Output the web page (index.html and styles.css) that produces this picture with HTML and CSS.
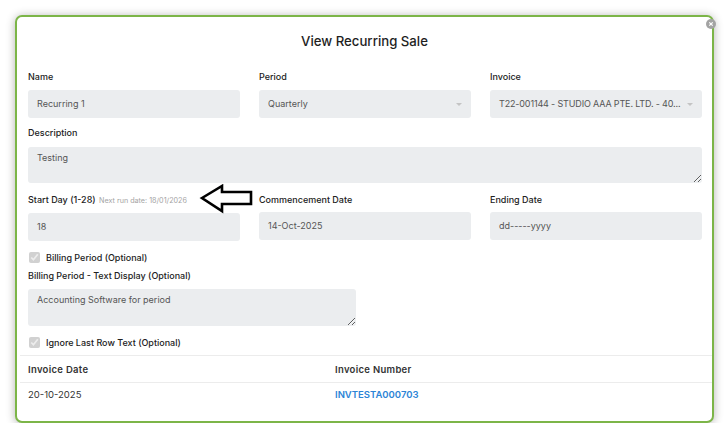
FILE: index.html
```html
<!DOCTYPE html>
<html>
<head>
<meta charset="utf-8">
<link rel="stylesheet" href="styles.css">
</head>
<body>
<div class="modal">
  <span class="close" aria-label="close"><svg width="10" height="10" viewBox="0 0 10 10"><circle cx="5" cy="5" r="5" fill="#a3a3a3"/><path d="M3.3 3.3 L6.7 6.7 M6.7 3.3 L3.3 6.7" stroke="#fff" stroke-width="1.2"/></svg></span>
  <h1 class="title">View Recurring Sale</h1>
  <div class="form">
    <div class="row3">
      <div class="field">
        <label class="lbl">Name</label>
        <div class="input">Recurring 1</div>
      </div>
      <div class="field">
        <label class="lbl">Period</label>
        <div class="input select">Quarterly<span class="caret"></span></div>
      </div>
      <div class="field">
        <label class="lbl">Invoice</label>
        <div class="input select inv">T22-001144 - STUDIO AAA PTE. LTD. - 40...<span class="caret"></span></div>
      </div>
    </div>
    <div class="field desc">
      <label class="lbl">Description</label>
      <textarea class="area area-desc" readonly>Testing</textarea>
    </div>
    <div class="row3 dates">
      <div class="field">
        <label class="lbl">Start Day (1-28) <span class="hint">Next run date: 18/01/2026</span></label>
        <div class="input">18</div>
      </div>
      <div class="field">
        <label class="lbl">Commencement Date</label>
        <div class="input">14-Oct-2025</div>
      </div>
      <div class="field">
        <label class="lbl">Ending Date</label>
        <div class="input">dd-----yyyy</div>
      </div>
    </div>
    <label class="check check-billing"><input type="checkbox" checked disabled> Billing Period (Optional)</label>
    <div class="field billing">
      <label class="lbl">Billing Period - Text Display (Optional)</label>
      <textarea class="area area-billing" readonly>Accounting Software for period</textarea>
    </div>
    <label class="check check-ignore"><input type="checkbox" checked disabled> Ignore Last Row Text (Optional)</label>
  </div>
  <table class="tbl">
    <thead>
      <tr><th class="c1">Invoice Date</th><th>Invoice Number</th></tr>
    </thead>
    <tbody>
      <tr><td class="c1">20-10-2025</td><td><a class="link" href="#">INVTESTA000703</a></td></tr>
    </tbody>
  </table>
</div>
<svg class="arrow" width="56" height="30" viewBox="0 0 56 30"><polygon points="3,14 23,2 23,8 52,8 52,20 23,20 23,27" fill="none" stroke="#000" stroke-width="2.6" stroke-linejoin="miter"/></svg>
</body>
</html>
```
FILE: styles.css
```css
* { box-sizing: border-box; }
html, body { margin: 0; padding: 0; background: #fff; }
body {
  padding: 15px 0 0 15px;
  font-family: Inter, "Liberation Sans", sans-serif;
  position: relative;
}
.modal {
  position: relative;
  width: 699px;
  height: 408px;
  border: 2px solid #7cb548;
  border-radius: 7px;
  background: #fff;
  box-shadow: 0 1px 10px rgba(0,0,0,0.3);
}
.close {
  position: absolute;
  right: -4px;
  top: 2px;
  width: 10px;
  height: 10px;
  line-height: 0;
}
.title {
  margin: 0;
  padding-top: 15px;
  height: 53px;
  line-height: 18px;
  text-align: center;
  font-size: 13.2px;
  font-weight: 500;
  color: #1e1e1e;
}
.form {
  padding: 0 10px 0 11px;
}
.row3 {
  display: grid;
  grid-template-columns: repeat(3, minmax(0, 1fr));
  column-gap: 19px;
}
.field { display: flex; flex-direction: column; }
.lbl {
  display: block;
  font-size: 9px;
  line-height: 14px;
  font-weight: 500;
  color: #222;
  margin-bottom: 6px;
  white-space: nowrap;
}
.hint {
  font-size: 7.2px;
  font-weight: 400;
  color: #a4a4a4;
  margin-left: 1px;
}
.input {
  position: relative;
  height: 28px;
  line-height: 28px;
  padding: 0 9px;
  background: #ebedef;
  border-radius: 3px;
  font-size: 9px;
  color: #555;
  white-space: nowrap;
  overflow: hidden;
}
.select { padding-right: 16px; }
.inv { letter-spacing: -0.15px; }
.caret {
  position: absolute;
  right: 9px;
  top: 13px;
  width: 0;
  height: 0;
  border-left: 3px solid transparent;
  border-right: 3px solid transparent;
  border-top: 3px solid #c4c4c4;
}
.desc { margin-top: 8px; }
.desc .lbl { margin-bottom: 7px; }
.area {
  display: block;
  border: none;
  outline: none;
  background: #ebedef;
  border-radius: 3px;
  font-family: Inter, "Liberation Sans", sans-serif;
  font-size: 9px;
  line-height: 14px;
  color: #555;
  padding: 4px 9px;
  resize: both;
}
.area-desc { width: 100%; height: 36px; }
.dates { margin-top: 10px; }
.dates .lbl { margin-bottom: 5px; }
.check {
  display: flex;
  align-items: center;
  gap: 6px;
  height: 14px;
  font-size: 9px;
  font-weight: 500;
  color: #222;
  padding-left: 1px;
}
.check input {
  margin: 0;
  width: 11px;
  height: 11px;
}
.check-billing { margin-top: 9px; }
.billing { margin-top: 5px; }
.area-billing { width: 328px; height: 37px; }
.check-ignore { margin-top: 9px; }
.tbl {
  margin-top: 6px;
  border-collapse: collapse;
  border-top: 1px solid #ececec;
  margin-left: 3px;
  width: calc(100% - 3px);
}
.tbl th, .tbl td {
  text-align: left;
  font-size: 9.5px;
  color: #333;
  padding: 0;
}
.tbl th {
  height: 27px;
  font-weight: 600;
  letter-spacing: 0.3px;
  border-bottom: 1px solid #ececec;
}
.tbl td { height: 24px; font-weight: 400; }
.tbl .c1 { width: 315px; padding-left: 8px; }
.link { color: #2c84d6; text-decoration: none; font-weight: 600; }
.arrow {
  position: absolute;
  left: 199px;
  top: 184px;
}
```
